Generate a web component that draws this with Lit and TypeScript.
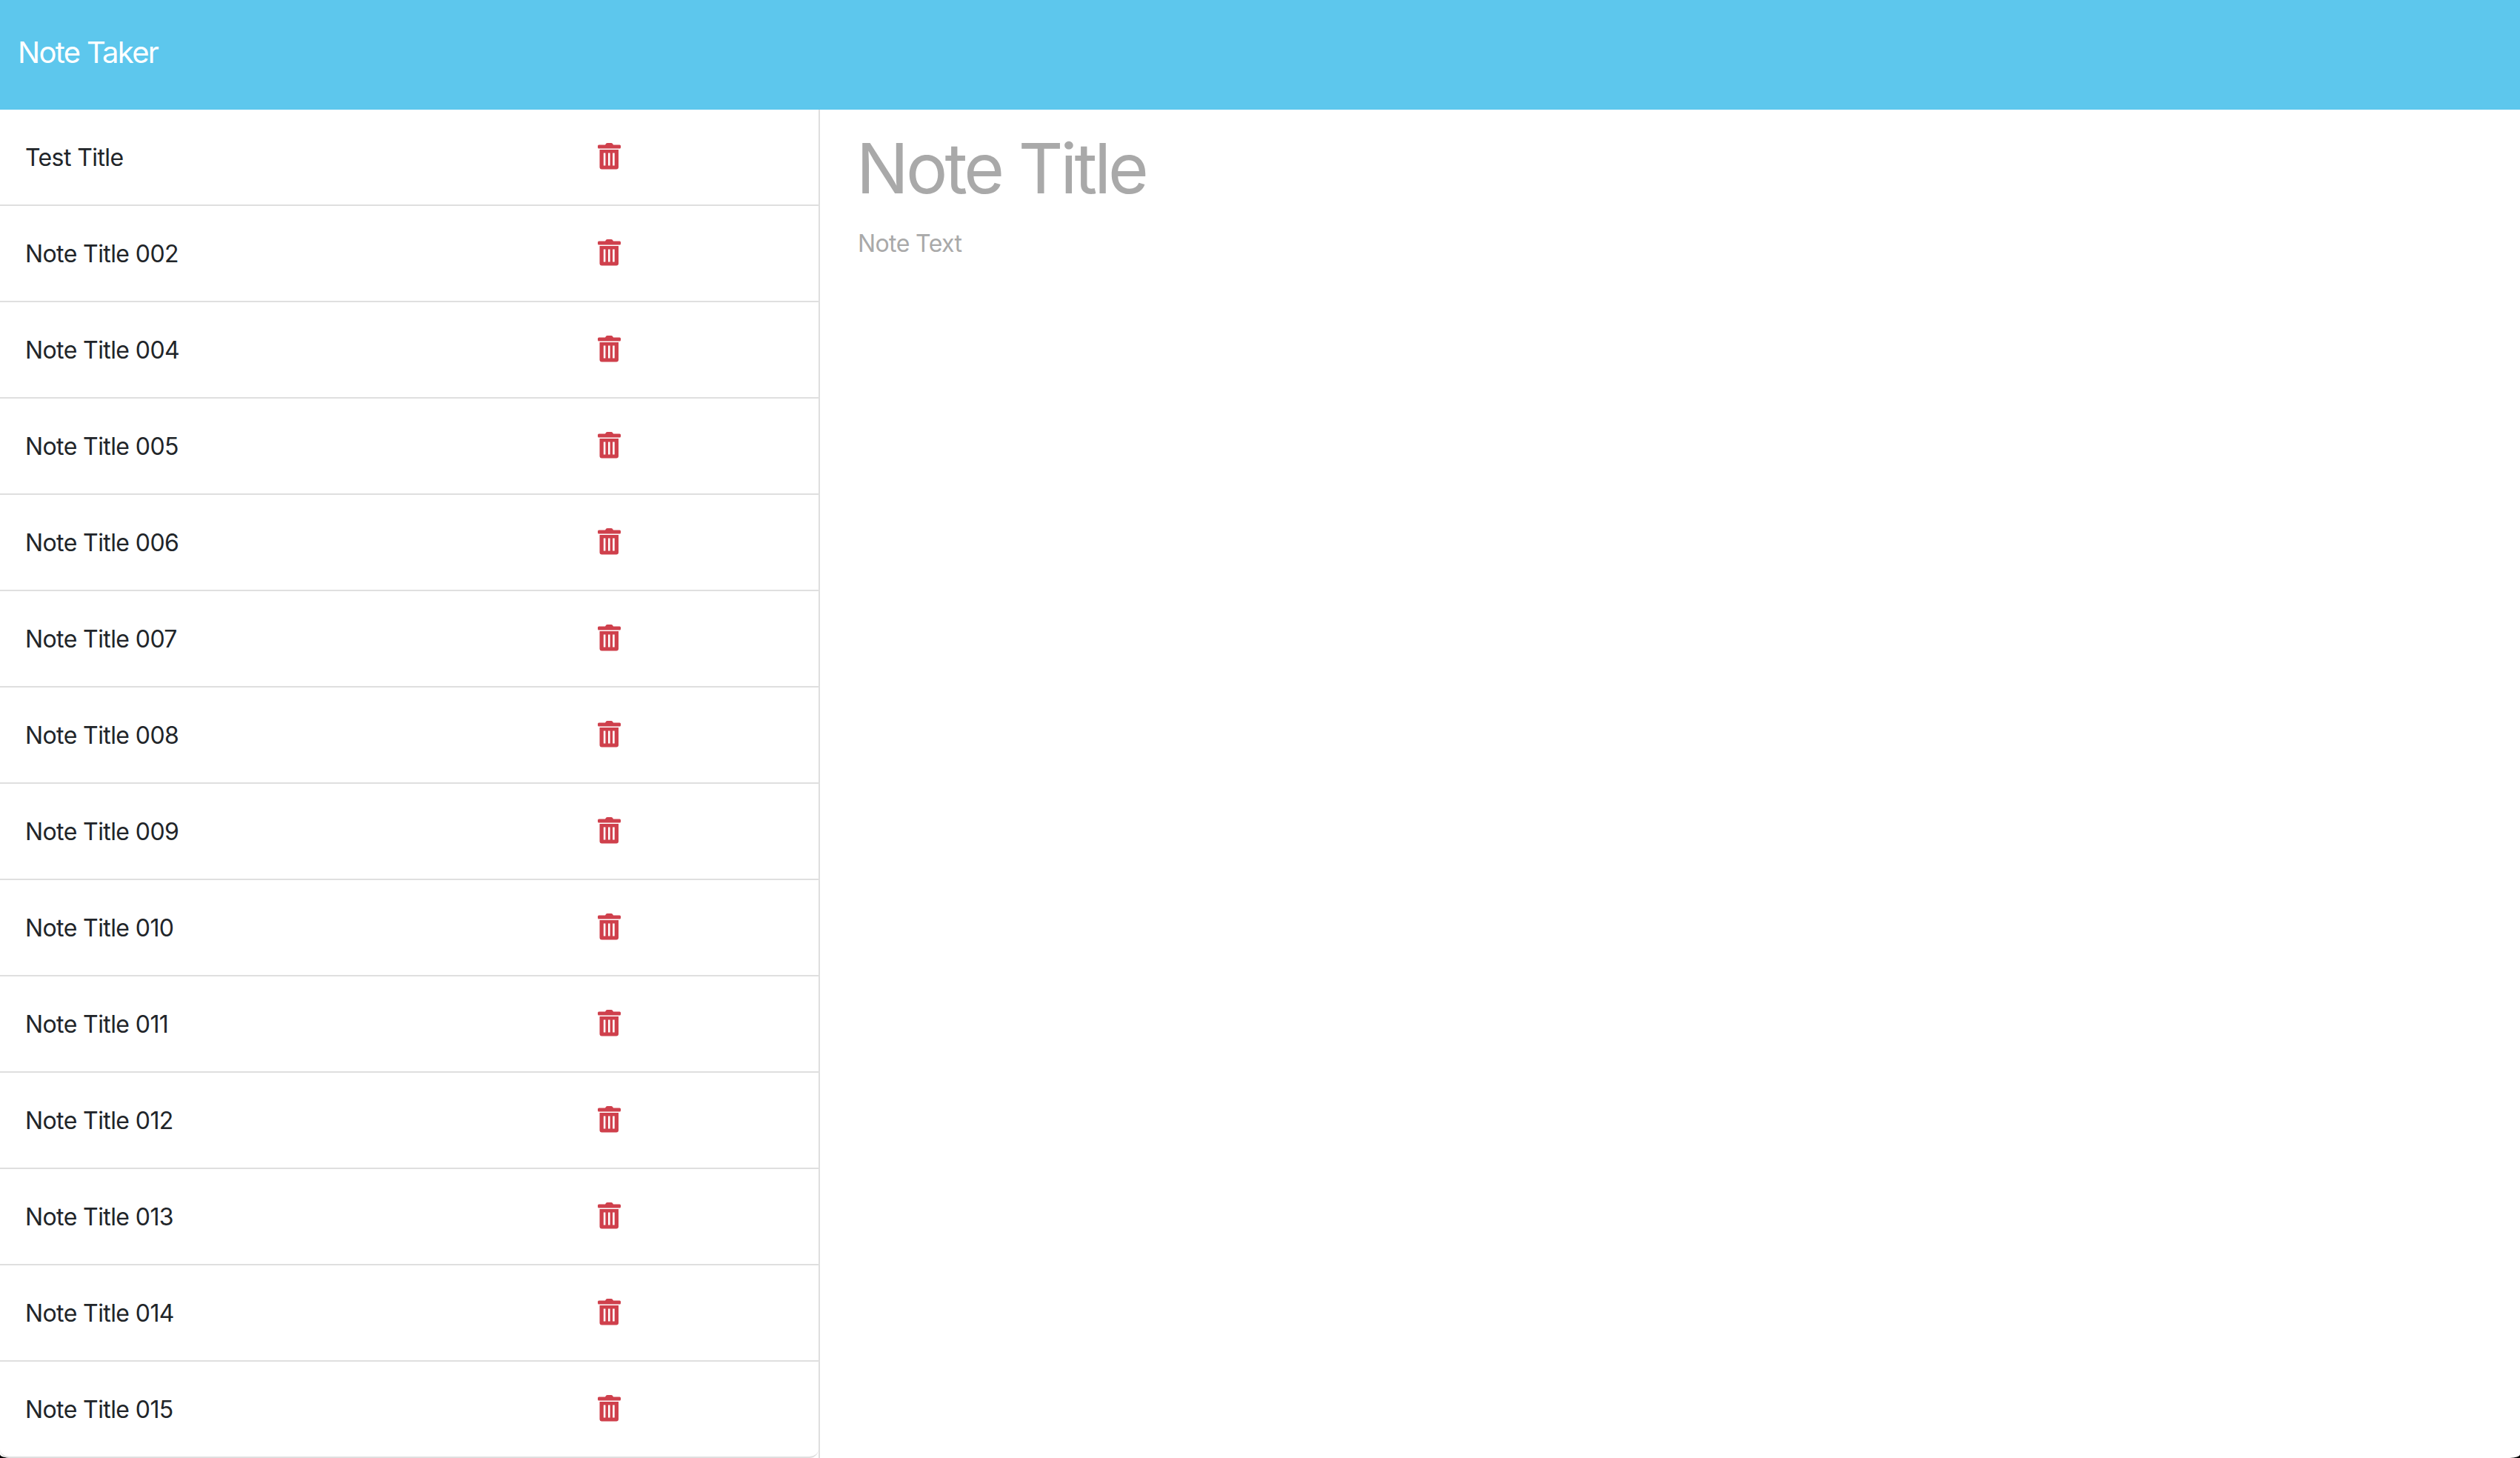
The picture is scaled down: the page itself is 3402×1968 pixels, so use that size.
import { LitElement, html, css, svg } from "lit";
import { customElement } from "lit/decorators.js";

const TITLES = [
  "Test Title", "Note Title 002", "Note Title 004", "Note Title 005", "Note Title 006",
  "Note Title 007", "Note Title 008", "Note Title 009", "Note Title 010", "Note Title 011",
  "Note Title 012", "Note Title 013", "Note Title 014", "Note Title 015",
];

const trash = svg`<path fill-rule="evenodd" d="M10 2.500 L11 1 Q11.500 0 13 0 H18 Q19.500 0 20 1 L21 2.500 H29.500 Q31 2.500 31 4 V6 Q31 7.500 29.500 7.500 H1.500 Q0 7.500 0 6 V4 Q0 2.500 1.500 2.500 Z M2.500 9 H28 V32.500 Q28 35.500 25 35.500 H5.500 Q2.500 35.500 2.500 32.500 Z M7.800 13.500 V30.500 H10.400 V13.500 Z M14 13.500 V30.500 H16.600 V13.500 Z M20.100 13.500 V30.500 H22.700 V13.500 Z"/>`;

@customElement("app-root")
export class AppRoot extends LitElement {
  static styles = css`
    :host {
      display: block;
      height: 1968px;
      width: 3402px;
      overflow: hidden;
      background: #000;
      font-family: Inter, "Liberation Sans", sans-serif;
    }
    .window {
      height: 100%;
      display: flex;
      flex-direction: column;
      background: #fff;
      border-radius: 0 0 14px 14px / 0 0 5px 5px;
      overflow: hidden;
    }
    .bar {
      flex: none;
      height: 148px;
      background: #5dc7ed;
      display: flex;
      align-items: center;
      padding: 0 0 7px 24px;
      box-sizing: border-box;
    }
    .brand {
      color: #fff;
      font-size: 40px;
      line-height: 60px;
      letter-spacing: -1.7px;
    }
    .main {
      flex: 1;
      display: flex;
      min-height: 0;
    }
    .list {
      flex: none;
      width: 1107px;
      box-sizing: border-box;
      border-right: 2px solid #dfdfdf;
      display: flex;
      flex-direction: column;
    }
    .row {
      flex: none;
      height: 130px;
      box-sizing: border-box;
      border-bottom: 2px solid #dfdfdf;
      display: flex;
      align-items: center;
      color: #212529;
      font-size: 32px;
      letter-spacing: -0.6px;
      padding-left: 34px;
    }
    .row:last-child {
      border-radius: 0 0 12px 12px;
    }
    .name {
      width: 773px;
      flex: none;
    }
    .icon {
      width: 31px;
      height: 36px;
      fill: #cf404c;
      flex: none;
      display: block;
      margin-top: -2px;
    }
    .editor {
      flex: 1;
      padding: 24px 0 0 51px;
      min-width: 0;
    }
    .title {
      color: #a9a9a9;
      font-size: 94px;
      line-height: 110px;
      letter-spacing: -3.9px;
      margin-left: -2px;
    }
    .text {
      color: #a9a9a9;
      font-size: 32px;
      line-height: 48px;
      letter-spacing: -0.6px;
      margin-top: 23px;
    }
  `;

  render() {
    return html`
      <div class="window">
        <div class="bar"><span class="brand">Note Taker</span></div>
        <div class="main">
          <div class="list">
            ${TITLES.map(
              (t) => html`<div class="row">
                <span class="name">${t}</span>
                <svg class="icon" viewBox="0 0 31 36">${trash}</svg>
              </div>`
            )}
          </div>
          <div class="editor">
            <div class="title">Note Title</div>
            <div class="text">Note Text</div>
          </div>
        </div>
      </div>
    `;
  }
}
